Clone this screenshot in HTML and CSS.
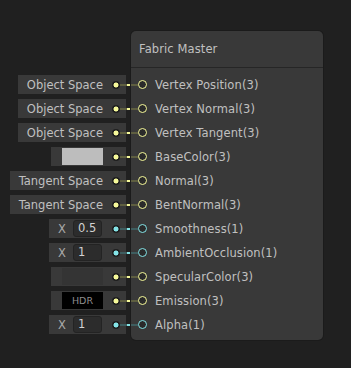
FILE: index.html
```html
<!DOCTYPE html>
<html lang="en">
<head>
    <meta charset="UTF-8">
    <meta name="viewport" content="width=device-width, initial-scale=1.0">
    <title>Fabric Master</title>
    <link rel="stylesheet" href="styles.css">
</head>
<body>
    <div class="graph">
        <div class="inputs">
            <div class="slot vec3">
                <div class="field"><span class="text">Object Space</span><span class="dot"></span><span class="wire"></span></div>
                <span class="gap"></span>
            </div>
            <div class="slot vec3">
                <div class="field"><span class="text">Object Space</span><span class="dot"></span><span class="wire"></span></div>
                <span class="gap"></span>
            </div>
            <div class="slot vec3">
                <div class="field"><span class="text">Object Space</span><span class="dot"></span><span class="wire"></span></div>
                <span class="gap"></span>
            </div>
            <div class="slot vec3">
                <div class="field swatch"><span class="color light"></span><span class="dot"></span><span class="wire"></span></div>
                <span class="gap"></span>
            </div>
            <div class="slot vec3">
                <div class="field"><span class="text">Tangent Space</span><span class="dot"></span><span class="wire"></span></div>
                <span class="gap"></span>
            </div>
            <div class="slot vec3">
                <div class="field"><span class="text">Tangent Space</span><span class="dot"></span><span class="wire"></span></div>
                <span class="gap"></span>
            </div>
            <div class="slot vec1">
                <div class="field"><span class="axis">X</span><span class="num">0.5</span><span class="dot"></span><span class="wire"></span></div>
                <span class="gap"></span>
            </div>
            <div class="slot vec1">
                <div class="field"><span class="axis">X</span><span class="num">1</span><span class="dot"></span><span class="wire"></span></div>
                <span class="gap"></span>
            </div>
            <div class="slot vec3">
                <div class="field swatch"><span class="color dim"></span><span class="dot"></span><span class="wire"></span></div>
                <span class="gap"></span>
            </div>
            <div class="slot vec3">
                <div class="field swatch"><span class="color hdr">HDR</span><span class="dot"></span><span class="wire"></span></div>
                <span class="gap"></span>
            </div>
            <div class="slot vec1">
                <div class="field"><span class="axis">X</span><span class="num">1</span><span class="dot"></span><span class="wire"></span></div>
                <span class="gap"></span>
            </div>
        </div>

        <div class="node">
            <div class="node-title">Fabric Master</div>
            <div class="ports">
                <div class="port vec3"><span class="wire"></span><span class="ring"></span><span class="name">Vertex Position(3)</span></div>
                <div class="port vec3"><span class="wire"></span><span class="ring"></span><span class="name">Vertex Normal(3)</span></div>
                <div class="port vec3"><span class="wire"></span><span class="ring"></span><span class="name">Vertex Tangent(3)</span></div>
                <div class="port vec3"><span class="wire"></span><span class="ring"></span><span class="name">BaseColor(3)</span></div>
                <div class="port vec3"><span class="wire"></span><span class="ring"></span><span class="name">Normal(3)</span></div>
                <div class="port vec3"><span class="wire"></span><span class="ring"></span><span class="name">BentNormal(3)</span></div>
                <div class="port vec1"><span class="wire"></span><span class="ring"></span><span class="name">Smoothness(1)</span></div>
                <div class="port vec1"><span class="wire"></span><span class="ring"></span><span class="name">AmbientOcclusion(1)</span></div>
                <div class="port vec3"><span class="wire"></span><span class="ring"></span><span class="name">SpecularColor(3)</span></div>
                <div class="port vec3"><span class="wire"></span><span class="ring"></span><span class="name">Emission(3)</span></div>
                <div class="port vec1"><span class="wire"></span><span class="ring"></span><span class="name">Alpha(1)</span></div>
            </div>
        </div>
    </div>
</body>
</html>
```

FILE: styles.css
```css
body {
    margin: 0;
    background-color: #202020;
    font-family: "DejaVu Sans", Verdana, sans-serif;
    font-size: 11.5px;
    color: #c0c0c0;
    height: 368px;
    overflow: hidden;
}

.vec3 {
    --port: #f6f99a;
    --edge: #5e5e40;
}

.vec1 {
    --port: #84e4e7;
    --edge: #3e5d5f;
}

.graph {
    display: flex;
    align-items: flex-start;
    padding-top: 31px;
}

/* inline values on the left */
.inputs {
    width: 131px;
    margin-top: 44px;
    display: flex;
    flex-direction: column;
    align-items: flex-end;
    gap: 5px;
}

.slot {
    display: flex;
    align-items: center;
}

.field {
    display: flex;
    align-items: center;
    height: 19px;
    background-color: #393939;
    padding-left: 9px;
}

.field.swatch {
    padding-left: 11px;
}

.text {
    white-space: nowrap;
}

.dot {
    width: 8px;
    height: 8px;
    margin-left: 9px;
    border-radius: 50%;
    background: radial-gradient(circle, var(--port) 0 2.2px, #1e1e1e 2.8px);
}

.field .wire {
    width: 6px;
    height: 2px;
    background-color: var(--edge);
}

.gap {
    width: 5px;
    height: 2px;
    background: linear-gradient(to right, var(--edge) 1px, var(--port) 1px 4px, var(--edge) 4px);
}

.color {
    width: 41px;
    height: 17px;
}

.color.light {
    background-color: #bdbdbd;
}

.color.dim {
    background-color: #343434;
}

.color.hdr {
    background-color: #000;
    color: #8e8e8e;
    font-size: 9.5px;
    line-height: 17px;
    text-align: center;
}

.axis {
    color: #a9a9a9;
}

.num {
    width: 29px;
    height: 17px;
    margin-left: 7px;
    box-sizing: border-box;
    padding-left: 4px;
    line-height: 15px;
    background-color: #2c2c2c;
    border: 1px solid #232323;
    border-radius: 3px;
    color: #d2d2d2;
}

.num + .dot {
    margin-left: 10px;
}

/* master node */
.node {
    width: 192px;
    height: 309px;
    background-color: #393939;
    border-radius: 5px;
    box-shadow: 0 0 0 1px #1b1b1b;
}

.node-title {
    height: 36px;
    line-height: 36px;
    padding-left: 8px;
    border-bottom: 1px solid #262626;
    color: #c0c0c0;
    letter-spacing: 0.1px;
}

.ports {
    display: flex;
    flex-direction: column;
    gap: 5px;
    padding-top: 7px;
}

.port {
    display: flex;
    align-items: center;
    height: 19px;
}

.port .wire {
    width: 7px;
    height: 2px;
    background-color: var(--edge);
}

.ring {
    width: 9px;
    height: 9px;
    box-sizing: border-box;
    border: 1.5px solid var(--port);
    border-radius: 50%;
    background-color: #2a2a2a;
    margin-top: -1px;
}

.name {
    margin-left: 8px;
    white-space: nowrap;
    letter-spacing: 0.1px;
}
```
